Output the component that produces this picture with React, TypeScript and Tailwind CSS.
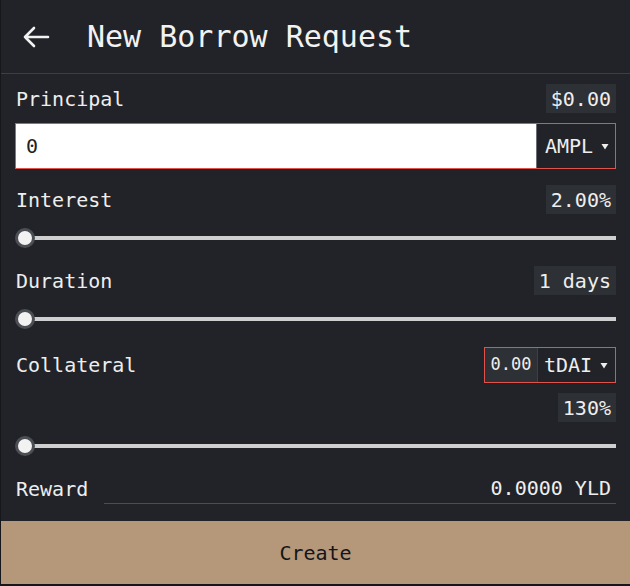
import { useState } from 'react'

const mono = { fontFamily: '"DejaVu Sans Mono", "Liberation Mono", monospace' }

function Badge({ children }: { children: React.ReactNode }) {
  return (
    <span className="h-[29px] px-[5px] flex items-center bg-[#2d3035] text-[20px] leading-none text-[#eeeeee]">
      {children}
    </span>
  )
}

function Caret() {
  return (
    <svg width="8" height="7" viewBox="0 0 8 7" className="ml-[8px]">
      <path d="M0.5 1 L7.5 1 L4 6.5 Z" fill="#eeeeee" />
    </svg>
  )
}

function Slider() {
  return (
    <div className="relative h-[20px] pt-[8px]">
      <div className="ml-[10px] h-[4px] bg-[#cfcfcf]" />
      <div className="absolute left-0 top-0 w-[20px] h-[20px] rounded-full bg-[#f2f2f2] border-[3px] border-[#4b4e53]" />
    </div>
  )
}

function Row({ label, children }: { label: string; children?: React.ReactNode }) {
  return (
    <div className="flex items-center justify-between h-[29px]">
      <span className="text-[20px] leading-none text-[#eeeeee] pl-[1px]">{label}</span>
      {children}
    </div>
  )
}

export default function App() {
  const [principal] = useState('0')

  return (
    <div
      style={mono}
      className="w-[630px] h-[586px] bg-[#212328] border-l border-b-2 border-[#15171a] flex flex-col text-[#eeeeee]"
    >
      {/* header */}
      <div className="h-[74px] shrink-0 border-b border-[#3c3f44] flex items-center pl-[21px]">
        <svg width="28" height="22" viewBox="0 0 28 22" fill="none">
          <path d="M26 11 H3 M12 2 L3 11 L12 20" stroke="#f2f2f2" strokeWidth="2.6" strokeLinecap="round" strokeLinejoin="round" />
        </svg>
        <h1 className="ml-[37px] text-[30px] leading-none text-[#f2f2f2]">New Borrow Request</h1>
      </div>

      <div className="flex-1 flex flex-col px-[14px] pt-[10px]">
        <Row label="Principal">
          <Badge>$0.00</Badge>
        </Row>

        {/* red frame drawn as 1px padding on a red box */}
        <div className="mt-[10px] h-[46px] flex p-[1px] bg-[#e0524a]">
          <div className="flex-1 bg-white flex items-center pl-[10px] text-[20px] text-[#222222]">
            {principal}
          </div>
          <div className="w-[79px] border-l border-[#6b6e73] bg-[#212328] flex items-center pl-[8px] text-[20px]">
            AMPL
            <Caret />
          </div>
        </div>

        <div className="mt-[16px]">
          <Row label="Interest">
            <Badge>2.00%</Badge>
          </Row>
        </div>
        <div className="mt-[14px]">
          <Slider />
        </div>

        <div className="mt-[18px]">
          <Row label="Duration">
            <Badge>1 days</Badge>
          </Row>
        </div>
        <div className="mt-[14px]">
          <Slider />
        </div>

        <div className="mt-[18px] flex items-center justify-between h-[36px]">
          <span className="text-[20px] leading-none pl-[1px]">Collateral</span>
          <div className="h-[36px] flex p-[1px] bg-[#e0524a]">
            <div className="w-[52px] bg-[#2d3035] flex items-center justify-center text-[17px]">0.00</div>
            <div className="w-[78px] border-l border-[#3c3f44] bg-[#212328] flex items-center pl-[6px] text-[20px]">
              tDAI
              <Caret />
            </div>
          </div>
        </div>

        <div className="mt-[10px] flex justify-end">
          <Badge>130%</Badge>
        </div>
        <div className="mt-[14px]">
          <Slider />
        </div>

        <div className="mt-[17px] flex items-center h-[31px]">
          <span className="w-[89px] text-[20px] leading-none pl-[1px]">Reward</span>
          <div className="flex-1 h-full flex items-center justify-end pr-[5px] border-b border-[#4a4d52] text-[20px]">
            0.0000 YLD
          </div>
        </div>
      </div>

      <button className="h-[63px] shrink-0 bg-[#b5987a] text-[20px] text-[#141518]" style={mono}>
        Create
      </button>
    </div>
  )
}
